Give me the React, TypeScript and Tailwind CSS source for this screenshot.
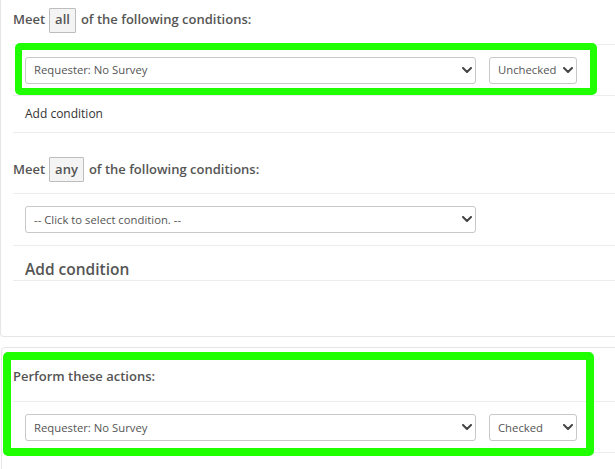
import React from 'react';

const chevron = (
  <svg
    className="pointer-events-none absolute right-[4px] top-1/2 -translate-y-1/2"
    width="10"
    height="6"
    viewBox="0 0 10 6"
    fill="none"
  >
    <path d="M1 1l4 4 4-4" stroke="#444" strokeWidth="2" strokeLinecap="round" strokeLinejoin="round" />
  </svg>
);

interface SelectBoxProps {
  value: string;
  options: string[];
  width: string;
}

function SelectBox({ value, options, width }: SelectBoxProps) {
  return (
    <div className={`relative h-[27px] ${width}`}>
      <select
        defaultValue={value}
        className="h-full w-full appearance-none rounded-[3px] border border-[#c8c8c8] bg-white pl-[8px] pr-[14px] text-[11.3px] text-[#555] outline-none"
      >
        {options.map((o) => (
          <option key={o}>{o}</option>
        ))}
      </select>
      {chevron}
    </div>
  );
}

function MatchHeading({ word }: { word: string }) {
  return (
    <div className="flex items-center text-[13px] font-semibold text-[#555]">
      <span>Meet</span>
      <span className="ml-[4px] mr-[5px] flex h-[25px] items-center rounded-[1px] border border-[#bdbdbd] bg-[#f4f4f4] px-[5px]">
        {word}
      </span>
      <span>of the following conditions:</span>
    </div>
  );
}

export default function App() {
  return (
    <div className="relative h-[469px] w-[615px] overflow-hidden bg-white font-['Open_Sans','Noto_Sans',sans-serif]">
      {/* conditions card */}
      <div className="w-[660px] rounded-b-[4px] border border-t-0 border-[#e6e6e6] pl-[12px]">
        <div className="flex h-[44px] items-center pb-[4px]">
          <MatchHeading word="all" />
        </div>
        <div className="flex h-[51px] items-center gap-[13px] border-t border-[#ececec] pl-[12px] pb-[1px]">
          <SelectBox value="Requester: No Survey" options={['Requester: No Survey']} width="w-[451px]" />
          <SelectBox value="Unchecked" options={['Unchecked', 'Checked']} width="w-[88px]" />
        </div>
        <div className="flex h-[37px] items-center border-t border-[#ececec] pl-[12px] text-[12px] text-[#333]">
          Add condition
        </div>
        <div className="flex h-[61px] items-center border-t border-[#ececec] pt-[13px]">
          <MatchHeading word="any" />
        </div>
        <div className="flex h-[52px] items-center border-t border-[#ececec] pl-[12px] pb-[1px]">
          <SelectBox
            value="-- Click to select condition. --"
            options={['-- Click to select condition. --']}
            width="w-[451px]"
          />
        </div>
        <div className="h-[35px] border-t border-[#ececec] pl-[12px] pt-[13px] text-[15.5px] font-semibold leading-[20px] text-[#555]">
          Add condition
        </div>
        <div className="h-[56px] border-t border-[#ececec]" />
      </div>

      {/* actions card */}
      <div className="mt-[10px] ml-px w-[660px] rounded-[4px] border border-[#e6e6e6] pl-[11px]">
        <div className="flex h-[53px] items-center pt-[5px] text-[13px] font-semibold text-[#555]">
          Perform these actions:
        </div>
        <div className="flex h-[51px] items-center gap-[13px] border-t border-[#ececec] pl-[12px]">
          <SelectBox value="Requester: No Survey" options={['Requester: No Survey']} width="w-[451px]" />
          <SelectBox value="Checked" options={['Unchecked', 'Checked']} width="w-[88px]" />
        </div>
        <div className="h-[40px] border-t border-[#ececec]" />
      </div>

      {/* highlight overlays */}
      <div className="pointer-events-none absolute left-[15px] top-[43px] h-[52px] w-[582px] rounded-[5px] border-[7px] border-[#1fff00]" />
      <div className="pointer-events-none absolute left-[3px] top-[352px] h-[104px] w-[591px] rounded-[5px] border-[8px] border-[#1fff00]" />
    </div>
  );
}
